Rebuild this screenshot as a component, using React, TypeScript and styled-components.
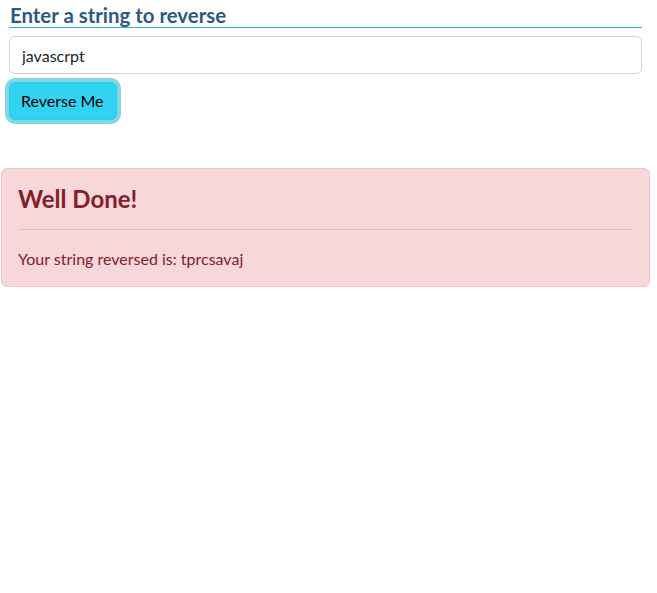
import React, { useState } from 'react';
import styled, { createGlobalStyle } from 'styled-components';

const GlobalStyle = createGlobalStyle`
  html, body {
    margin: 0;
    padding: 0;
    background: #fff;
  }
  body {
    font-family: Lato, "Open Sans", "Liberation Sans", sans-serif;
    font-size: 16px;
    line-height: 1.5;
    color: #212529;
  }
  * { box-sizing: border-box; }
`;

const Page = styled.div`
  width: 650px;
  padding-left: 1px;
`;

const FormSection = styled.form`
  display: flex;
  flex-direction: column;
  align-items: flex-start;
  gap: 8px;
  padding: 0 8px;
`;

const Title = styled.h2`
  align-self: stretch;
  margin: 0;
  padding: 3px 0 0 1px;
  font-size: 20.4px;
  font-weight: 700;
  line-height: 24px;
  color: #2c5a80;
  border-bottom: 1px solid #2bb6d3;
`;

const TextInput = styled.input`
  align-self: stretch;
  height: 38px;
  padding: 6px 12px;
  font: inherit;
  font-size: 16px;
  color: #212529;
  border: 1px solid #ced4da;
  border-radius: 6px;
  outline: none;
`;

const InfoButton = styled.button`
  height: 38px;
  padding: 6px 12px 6px 11px;
  font: inherit;
  font-size: 16px;
  color: #000;
  background: #31d2f2;
  border: 1px solid #25cff2;
  border-radius: 6px;
  box-shadow: 0 0 0 4px rgba(11, 172, 204, 0.5);
  cursor: pointer;
`;

const Alert = styled.div`
  margin-top: 48px;
  padding: 16px 16px 15px;
  background: #f8d7da;
  border: 1px solid #f5c2c7;
  border-radius: 6px;
  color: #842029;
`;

const AlertHeading = styled.h4`
  margin: 0;
  font-size: 24px;
  font-weight: 700;
  line-height: 28px;
`;

const Divider = styled.hr`
  margin: 16px 0;
  border: 0;
  border-top: 1px solid currentColor;
  opacity: 0.25;
`;

const AlertText = styled.p`
  margin: 0;
  line-height: 25px;
`;

const App: React.FC = () => {
  const [value, setValue] = useState('javascrpt');
  const [result, setResult] = useState('tprcsavaj');

  return (
    <Page>
      <GlobalStyle />
      <FormSection
        onSubmit={e => {
          e.preventDefault();
          setResult(value.split('').reverse().join(''));
        }}
      >
        <Title>Enter a string to reverse</Title>
        <TextInput value={value} onChange={e => setValue(e.target.value)} />
        <InfoButton type="submit">Reverse Me</InfoButton>
      </FormSection>

      <Alert>
        <AlertHeading>Well Done!</AlertHeading>
        <Divider />
        <AlertText>Your string reversed is: {result}</AlertText>
      </Alert>
    </Page>
  );
};

export default App;
